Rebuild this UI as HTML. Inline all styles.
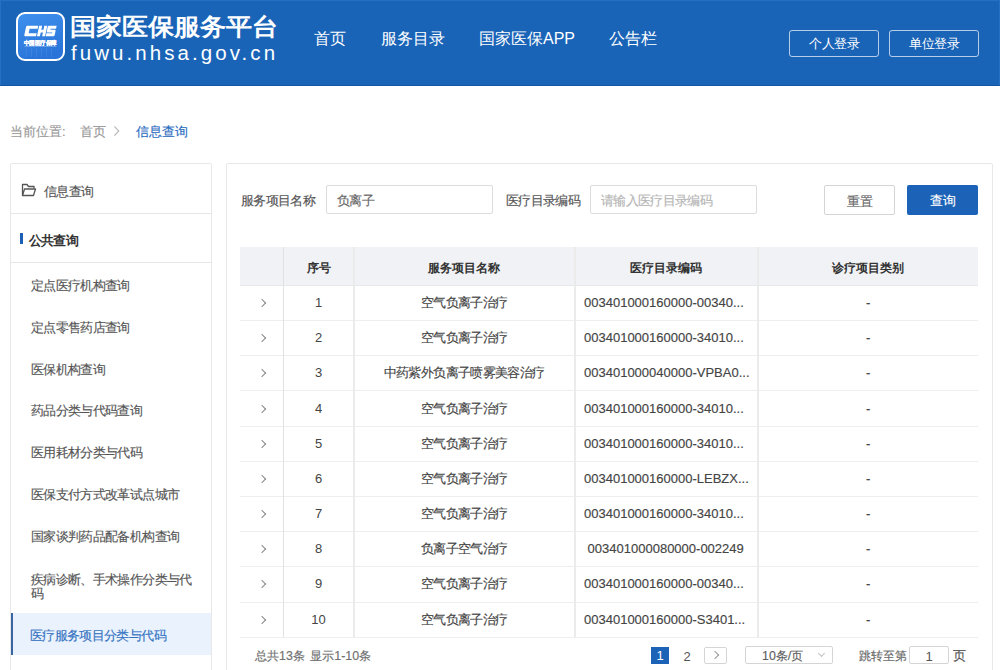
<!DOCTYPE html>
<html><head><meta charset="utf-8">
<style>
*{box-sizing:border-box;margin:0;padding:0}
html,body{width:1000px;height:670px;overflow:hidden;background:#fff;font-family:"Liberation Sans",sans-serif;color:#333}
.sitem,.lbl,.inp,.cell,.code,.crumb,.btn{-webkit-text-stroke:.15px currentColor}
.abs{position:absolute}
#hdr{position:absolute;left:0;top:0;width:1000px;height:86px;background:#1a64b8;border-bottom:1px solid #1557a5;box-shadow:inset 1px 1px 0 #2670c4,inset -1px 0 0 #2670c4}
#logo{position:absolute;left:16px;top:12px;width:49px;height:49px;border:2px solid #fff;border-radius:10px;background:linear-gradient(180deg,#3f90ea,#2f78dc);overflow:hidden}
#title{position:absolute;left:70px;top:12.6px;font-size:26px;font-weight:bold;color:#fff;white-space:nowrap;line-height:30px;transform:scaleY(.92);transform-origin:0 0}
#url{position:absolute;left:71px;top:41px;font-size:20.5px;color:#fff;letter-spacing:3.07px;white-space:nowrap;line-height:24px}
.nav{position:absolute;top:28px;font-size:16px;color:#fff;line-height:22px;white-space:nowrap}
.lbtn{position:absolute;top:30px;width:90px;height:27px;border:1px solid rgba(255,255,255,.68);border-radius:3px;color:#fff;font-size:13px;line-height:25px;text-align:center;letter-spacing:-.5px;padding-left:.5px}
.crumb{position:absolute;top:123px;font-size:13px;line-height:18px;color:#999;white-space:nowrap}
#side{position:absolute;left:10px;top:163px;width:202px;height:520px;border:1px solid #e8e8e8;border-radius:2px;background:#fff}
.sitem{position:absolute;left:0;width:200px;font-size:13px;letter-spacing:-.65px;color:#555;line-height:15px;padding-left:21px}
#main{position:absolute;left:226px;top:163px;width:767px;height:520px;border:1px solid #e8e8e8;border-radius:2px;background:#fff}
.lbl{position:absolute;margin-top:1px;font-size:13px;letter-spacing:-.65px;color:#555;line-height:18px;white-space:nowrap}
.inp{position:absolute;height:29px;border:1px solid #dcdcdc;border-radius:2px;font-size:13px;letter-spacing:-.65px;line-height:30px;padding-left:10px;color:#666}
.btn{position:absolute;top:185px;width:71px;height:30px;border-radius:2px;font-size:13px;line-height:31px;text-align:center}
#thead{position:absolute;left:240px;top:247px;width:738px;height:39px;background:#f0f2f5;border-bottom:1px solid #e6e8ec}
.th{position:absolute;top:249px;height:39px;line-height:39px;font-size:12.4px;font-weight:bold;color:#333;text-align:center}
.vl{position:absolute;top:247px;width:2px;height:390px;background:#ebebeb}
.hl{position:absolute;left:240px;width:738px;height:1px;background:#eeeeee}
.code{position:absolute;font-size:13px;color:#444;line-height:18px;white-space:nowrap}
.cell{position:absolute;font-size:13px;letter-spacing:-.65px;color:#444;line-height:18px;white-space:nowrap}
.chev{position:absolute;left:259px;width:6px;height:6px;border-right:1px solid #888;border-top:1px solid #888;transform:rotate(45deg)}
</style></head><body>
<div id="hdr"></div>
<svg class="abs" style="left:15px;top:11px" width="51" height="51" viewBox="0 0 51 51">
<defs><linearGradient id="lg" x1="0" y1="0" x2="0.3" y2="1"><stop offset="0" stop-color="#3f92ee"/><stop offset="1" stop-color="#2a74d9"/></linearGradient></defs>
<rect x="2" y="2" width="47" height="47" rx="8" fill="url(#lg)" stroke="#fff" stroke-width="2"/>
<g fill="#fff" transform="translate(11.3,14.8) skewX(-12) scale(.92,1)">
<path d="M1.2 0H13V3H4.3V7.5H13V10.5H1.2Q0 10.5 0 9.3V1.2Q0 0 1.2 0Z"/>
<path d="M14 0H17.2V4H19.6V0H22.8V10.5H19.6V6.6H17.2V10.5H14Z"/>
<path d="M24.7 0H33V3H27.2V4H31.8Q33 4 33 5.2V9.3Q33 10.5 31.8 10.5H23.5V7.5H29.8V6.8H24.7Q23.5 6.8 23.5 5.6V1.2Q23.5 0 24.7 0Z"/>
</g>
<text x="8.5" y="33.5" font-size="6" font-weight="900" fill="#fff" stroke="#fff" stroke-width=".25" textLength="33" lengthAdjust="spacingAndGlyphs">中国医疗保障</text>
<rect x="9.5" y="35" width="32" height="0.8" fill="#cfe2fb" opacity=".45"/>
<g fill="#ffffff" opacity=".07"><rect x="11" y="37" width="1" height="9"/><rect x="16" y="37" width="1" height="9"/><rect x="21" y="37" width="1" height="9"/><rect x="26" y="37" width="1" height="9"/><rect x="31" y="37" width="1" height="9"/><rect x="36" y="37" width="1" height="9"/></g>
</svg>
<div id="title">国家医保服务平台</div>
<div id="url">fuwu.nhsa.gov.cn</div>
<div class="nav" style="left:314px">首页</div>
<div class="nav" style="left:381px">服务目录</div>
<div class="nav" style="left:479px">国家医保APP</div>
<div class="nav" style="left:609px">公告栏</div>
<div class="lbtn" style="left:789px">个人登录</div>
<div class="lbtn" style="left:889px">单位登录</div>

<div class="crumb" style="left:10px">当前位置:</div>
<div class="crumb" style="left:80px">首页</div>
<svg class="abs" style="left:112px;top:125px" width="10" height="12" viewBox="0 0 10 12"><path d="M2.3 1.3L6.8 6L2.3 10.7" fill="none" stroke="#b8b8b8" stroke-width="1.1"/></svg>
<div class="crumb" style="left:136px;color:#2b6cbf">信息查询</div>


<div id="side"></div>
<svg class="abs" style="left:21px;top:183px" width="16" height="14" viewBox="0 0 16 14"><path d="M1.5 12.5V1.5h4.5l1.5 2h5.5v2" fill="none" stroke="#555" stroke-width="1.3" stroke-linejoin="round"/><path d="M1.5 12.5l2-6.5h11l-2 6.5z" fill="none" stroke="#555" stroke-width="1.3" stroke-linejoin="round"/></svg>
<div class="sitem" style="top:183.5px;left:44px;padding:0;color:#555">信息查询</div>
<div class="abs" style="left:11px;top:213px;width:200px;height:1px;background:#e6e6e6"></div>
<div class="abs" style="left:20px;top:233px;width:3px;height:11px;background:#1c5fb4"></div>
<div class="sitem" style="top:233px;left:28.5px;padding:0;color:#333;font-weight:bold;-webkit-text-stroke:0">公共查询</div>
<div class="abs" style="left:11px;top:262px;width:200px;height:1px;background:#e6e6e6"></div>
<div class="sitem" style="top:277.8px;left:31px;padding:0">定点医疗机构查询</div>
<div class="sitem" style="top:319.7px;left:31px;padding:0">定点零售药店查询</div>
<div class="sitem" style="top:361.5px;left:31px;padding:0">医保机构查询</div>
<div class="sitem" style="top:403.3px;left:31px;padding:0">药品分类与代码查询</div>
<div class="sitem" style="top:445.1px;left:31px;padding:0">医用耗材分类与代码</div>
<div class="sitem" style="top:486.9px;left:31px;padding:0">医保支付方式改革试点城市</div>
<div class="sitem" style="top:528.7px;left:31px;padding:0">国家谈判药品配备机构查询</div>
<div class="sitem" style="top:572.5px;left:31px;padding:0;width:165px;line-height:14.5px">疾病诊断、手术操作分类与代码</div>
<div class="abs" style="left:11px;top:613px;width:200px;height:42px;background:#e9f2fd;border-left:2px solid #3a65a0"></div>
<div class="sitem" style="top:628px;left:30px;padding:0;color:#3672c2">医疗服务项目分类与代码</div>
<div id="main"></div>
<div class="lbl" style="left:241px;top:191px">服务项目名称</div>
<div class="inp" style="left:326px;top:185px;width:167px">负离子</div>
<div class="lbl" style="left:506px;top:191px">医疗目录编码</div>
<div class="inp" style="left:590px;top:185px;width:167px;color:#b5b5b5">请输入医疗目录编码</div>
<div class="btn" style="left:824px;border:1px solid #d5d5d5;color:#666;background:#fff">重置</div>
<div class="btn" style="left:907px;background:#1c63b8;color:#fff">查询</div>
<div id="thead"></div>
<div class="th" style="left:283.7px;width:69.8px">序号</div>
<div class="th" style="left:353.5px;width:221.1px">服务项目名称</div>
<div class="th" style="left:574.6px;width:183.3px">医疗目录编码</div>
<div class="th" style="left:757.9px;width:220.1px">诊疗项目类别</div>
<div class="hl" style="top:320px"></div>
<div class="chev" style="top:300.0px"></div>
<div class="cell" style="left:283.7px;width:69.8px;text-align:center;top:294.0px;-webkit-text-stroke:0;letter-spacing:0">1</div>
<div class="cell" style="left:353.5px;width:221.1px;text-align:center;top:294.0px">空气负离子治疗</div>
<div class="code" style="left:584px;top:294.0px">003401000160000-00340...</div>
<div class="cell" style="left:757.9px;width:220.1px;text-align:center;top:294.0px">-</div>
<div class="hl" style="top:355px"></div>
<div class="chev" style="top:335.2px"></div>
<div class="cell" style="left:283.7px;width:69.8px;text-align:center;top:329.2px;-webkit-text-stroke:0;letter-spacing:0">2</div>
<div class="cell" style="left:353.5px;width:221.1px;text-align:center;top:329.2px">空气负离子治疗</div>
<div class="code" style="left:584px;top:329.2px">003401000160000-34010...</div>
<div class="cell" style="left:757.9px;width:220.1px;text-align:center;top:329.2px">-</div>
<div class="hl" style="top:390px"></div>
<div class="chev" style="top:370.3px"></div>
<div class="cell" style="left:283.7px;width:69.8px;text-align:center;top:364.3px;-webkit-text-stroke:0;letter-spacing:0">3</div>
<div class="cell" style="left:353.5px;width:221.1px;text-align:center;top:364.3px">中药紫外负离子喷雾美容治疗</div>
<div class="code" style="left:584px;top:364.3px">003401000040000-VPBA0...</div>
<div class="cell" style="left:757.9px;width:220.1px;text-align:center;top:364.3px">-</div>
<div class="hl" style="top:426px"></div>
<div class="chev" style="top:405.5px"></div>
<div class="cell" style="left:283.7px;width:69.8px;text-align:center;top:399.5px;-webkit-text-stroke:0;letter-spacing:0">4</div>
<div class="cell" style="left:353.5px;width:221.1px;text-align:center;top:399.5px">空气负离子治疗</div>
<div class="code" style="left:584px;top:399.5px">003401000160000-34010...</div>
<div class="cell" style="left:757.9px;width:220.1px;text-align:center;top:399.5px">-</div>
<div class="hl" style="top:461px"></div>
<div class="chev" style="top:440.7px"></div>
<div class="cell" style="left:283.7px;width:69.8px;text-align:center;top:434.7px;-webkit-text-stroke:0;letter-spacing:0">5</div>
<div class="cell" style="left:353.5px;width:221.1px;text-align:center;top:434.7px">空气负离子治疗</div>
<div class="code" style="left:584px;top:434.7px">003401000160000-34010...</div>
<div class="cell" style="left:757.9px;width:220.1px;text-align:center;top:434.7px">-</div>
<div class="hl" style="top:496px"></div>
<div class="chev" style="top:475.9px"></div>
<div class="cell" style="left:283.7px;width:69.8px;text-align:center;top:469.9px;-webkit-text-stroke:0;letter-spacing:0">6</div>
<div class="cell" style="left:353.5px;width:221.1px;text-align:center;top:469.9px">空气负离子治疗</div>
<div class="code" style="left:584px;top:469.9px">003401000160000-LEBZX...</div>
<div class="cell" style="left:757.9px;width:220.1px;text-align:center;top:469.9px">-</div>
<div class="hl" style="top:531px"></div>
<div class="chev" style="top:511.1px"></div>
<div class="cell" style="left:283.7px;width:69.8px;text-align:center;top:505.1px;-webkit-text-stroke:0;letter-spacing:0">7</div>
<div class="cell" style="left:353.5px;width:221.1px;text-align:center;top:505.1px">空气负离子治疗</div>
<div class="code" style="left:584px;top:505.1px">003401000160000-34010...</div>
<div class="cell" style="left:757.9px;width:220.1px;text-align:center;top:505.1px">-</div>
<div class="hl" style="top:566px"></div>
<div class="chev" style="top:546.2px"></div>
<div class="cell" style="left:283.7px;width:69.8px;text-align:center;top:540.2px;-webkit-text-stroke:0;letter-spacing:0">8</div>
<div class="cell" style="left:353.5px;width:221.1px;text-align:center;top:540.2px">负离子空气治疗</div>
<div class="code" style="left:584px;top:540.2px">&nbsp;003401000080000-002249</div>
<div class="cell" style="left:757.9px;width:220.1px;text-align:center;top:540.2px">-</div>
<div class="hl" style="top:602px"></div>
<div class="chev" style="top:581.4px"></div>
<div class="cell" style="left:283.7px;width:69.8px;text-align:center;top:575.4px;-webkit-text-stroke:0;letter-spacing:0">9</div>
<div class="cell" style="left:353.5px;width:221.1px;text-align:center;top:575.4px">空气负离子治疗</div>
<div class="code" style="left:584px;top:575.4px">003401000160000-00340...</div>
<div class="cell" style="left:757.9px;width:220.1px;text-align:center;top:575.4px">-</div>
<div class="hl" style="top:637px"></div>
<div class="chev" style="top:616.6px"></div>
<div class="cell" style="left:283.7px;width:69.8px;text-align:center;top:610.6px;-webkit-text-stroke:0;letter-spacing:0">10</div>
<div class="cell" style="left:353.5px;width:221.1px;text-align:center;top:610.6px">空气负离子治疗</div>
<div class="code" style="left:584px;top:610.6px">003401000160000-S3401...</div>
<div class="cell" style="left:757.9px;width:220.1px;text-align:center;top:610.6px">-</div>
<div class="vl" style="left:283px;width:1px;background:#e2e2e2;height:390px"></div>
<div class="vl" style="left:353px;width:2px;background:#ebebeb;height:390px"></div>
<div class="vl" style="left:574px;width:2px;background:#ebebeb;height:390px"></div>
<div class="vl" style="left:757px;width:2px;background:#ebebeb;height:390px"></div>
<div class="cell" style="left:255px;top:647px;color:#707070;font-size:12.4px;letter-spacing:0">总共13条<span style="margin-left:5.5px">显示1-10条</span></div>
<div class="abs" style="left:651px;top:647px;width:18px;height:17px;background:#1c63b8;color:#fff;font-size:13px;line-height:17px;text-align:center">1</div>
<div class="cell" style="left:681px;top:648px;width:12px;text-align:center;color:#555;letter-spacing:0;-webkit-text-stroke:0">2</div>
<div class="abs" style="left:704px;top:647px;width:23px;height:17px;border:1px solid #d5d5d5;border-radius:2px"></div>
<div class="abs" style="left:712px;top:652px;width:6px;height:6px;border-right:1px solid #999;border-top:1px solid #999;transform:rotate(45deg)"></div>
<div class="abs" style="left:745px;top:646px;width:88px;height:18px;border:1px solid #d5d5d5;border-radius:2px"></div>
<div class="cell" style="left:762px;top:647px;color:#606060;font-size:12.4px;letter-spacing:0">10条/页</div>
<div class="abs" style="left:819px;top:651px;width:5px;height:5px;border-right:1px solid #c0c0c0;border-bottom:1px solid #c0c0c0;transform:rotate(45deg)"></div>
<div class="cell" style="left:859px;top:646.5px;color:#666;font-size:12.4px;letter-spacing:0">跳转至第</div>
<div class="abs" style="left:909px;top:646px;width:40px;height:18px;border:1px solid #d5d5d5;border-radius:2px;font-size:13px;line-height:19px;text-align:center;color:#555">1</div>
<div class="cell" style="left:953px;top:647px;color:#555">页</div>
</body></html>
